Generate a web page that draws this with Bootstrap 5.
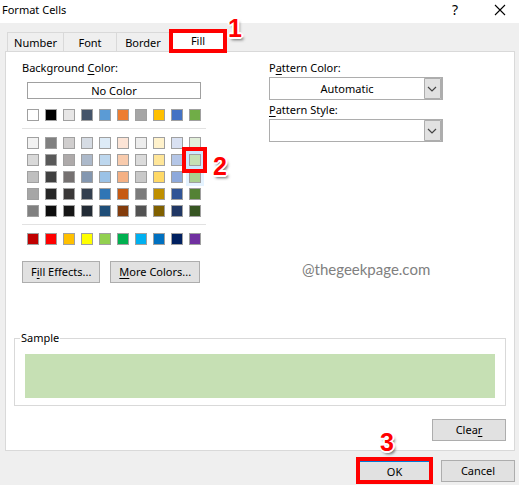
<!DOCTYPE html>
<html lang="en">
<head>
<meta charset="utf-8">
<meta name="viewport" content="width=device-width, initial-scale=1">
<title>Format Cells</title>
<link href="https://cdn.jsdelivr.net/npm/bootstrap@5.3.0/dist/css/bootstrap.min.css" rel="stylesheet">
<style>
body{background:#efefef;color:#000;font:11px/16px "Noto Sans","Open Sans",sans-serif}
.title-bar{height:23px;padding:0 13px 0 2px;line-height:20px}
.title-bar h1{font-size:11px;line-height:20px}
.title-bar button{border:0;background:none;padding:0;line-height:20px}
.title-bar .help{font-size:14px;margin-right:36px}
.tabs{margin:9px 6px 0 7px;border:0}
.tabs .nav-link{border:1px solid #d9d9d9;border-left-width:0;border-bottom:0;border-radius:0;background:#efefef;color:#000;padding:2px 0 0;height:19px;width:53px;line-height:16px;margin:0}
.tabs .first-tab{width:57px;border-left-width:1px}
.tabs .nav-link.active{background:#fff;width:58px;height:24px;margin:-3px 0 -2px -1px;border:4px solid #f00;padding:0;z-index:2}
.panel{background:#fff;border:1px solid #d9d9d9;margin:0 4px 0 5px}
.fill-side{padding:8px 10px 0 16px}
.pattern-side{padding:8px 10px 0 9px}
.btn-dialog{--bs-btn-font-size:11px;--bs-btn-line-height:16px;--bs-btn-padding-x:8px;--bs-btn-padding-y:2px;--bs-btn-border-radius:0;--bs-btn-color:#000;--bs-btn-bg:#e1e1e1;--bs-btn-border-color:#adadad;--bs-btn-hover-bg:#e5f1fb;--bs-btn-hover-border-color:#0078d7;--bs-btn-hover-color:#000}
.btn-short{width:74px}
.button-pair{gap:10px}
.no-color{display:block;width:174px;height:17px;padding:0;line-height:15px;border:1px solid #a0a0a0;background:#fff;margin:6px 0 10px 5px;color:#000}
.palette{display:grid;grid-template-columns:repeat(10,12px);column-gap:6px;row-gap:5px;width:184px;padding:0 5px}
.palette button{width:12px;height:12px;padding:0;border:1px solid #a0a0a0}
.palette .picked{outline:3px solid #cce8ff}
.palette .hovered{outline:3px solid #e5f3ff}
.rule{width:184px;height:1px;background:#e2e2e2;margin:7px 0 8px}
.picker{width:174px;height:23px;border:1px solid #adadad;border-radius:0;color:#000;font-size:11px;line-height:16px;padding:0 18px 0 0;text-align:center;text-align-last:center;margin:1px 0 2px;background:#fff url("data:image/svg+xml,%3Csvg xmlns='http://www.w3.org/2000/svg' width='18' height='21'%3E%3Cpath d='M.5.5h16v20H.5z' fill='%23e1e1e1' stroke='%23adadad'/%3E%3Cpath d='M17.5 0v21' stroke='%23adadad'/%3E%3Cpath d='M4 9l4 4 4-4' fill='none' stroke='%23444' stroke-width='1.2'/%3E%3C/svg%3E") right center/18px 21px no-repeat}
.spot{position:relative;display:block}
.red-frame{position:absolute;inset:-8px -7px -8px -8px;border:4px solid #f00;pointer-events:none}
.step{position:absolute;font:bold 25px/24px "Liberation Sans",sans-serif;color:#f00;text-shadow:-2px 0 #fff,2px 0 #fff,0 -2px #fff,0 2px #fff,-1px -1px #fff,1px -1px #fff,-1px 1px #fff,1px 1px #fff,2px 3px 3px #666;pointer-events:none}
.step-one{left:55px;top:-17px}
.step-two{left:23px;top:-1px}
.step-three{left:20px;top:-31px}
.watermark{font:15px/20px Lato,sans-serif;color:#808080;margin:117px 0 0 33px}
.sample{border:1px solid #d9d9d9;margin:47px 8px 13px 8px;padding:0 10px 7px}
.sample legend{float:none;width:auto;font-size:11px;line-height:16px;margin:0 0 0 -5px;padding:0 1px}
.sample-fill{height:44px;background:#c6e0b4;margin-top:8px}
.clear-row{margin:0 8px 9px}
.ok-frame{border:4px solid #f00;position:relative}
.ok-frame .btn{width:69px;height:19px;padding:0;line-height:17px;border:0;border-top:1px solid #0078d7}
.footer-row{margin:6px 4px 1px}
u{text-underline-offset:2px}
</style>
</head>
<body>
<header class="title-bar bg-white d-flex align-items-start">
  <h1 class="fw-normal mb-0 me-auto">Format Cells</h1>
  <button class="help" type="button" aria-label="Help">?</button>
  <button type="button" aria-label="Close"><svg class="d-block mt-1" width="12" height="12" viewBox="0 0 12 12"><path d="M1 1l10 10M11 1L1 11" stroke="#000" stroke-width="1.1"/></svg></button>
</header>
<nav class="tabs nav nav-tabs" role="tablist">
  <button class="nav-link first-tab" type="button" role="tab">Number</button>
  <button class="nav-link" type="button" role="tab">Font</button>
  <button class="nav-link" type="button" role="tab">Border</button>
  <button class="nav-link active position-relative" type="button" role="tab" aria-selected="true">Fill<span class="step step-one">1</span></button>
</nav>
<main>
  <section class="panel">
    <div class="row g-0">
      <div class="col-6 fill-side">
        <div>Background <u>C</u>olor:</div>
        <button class="no-color" type="button">No Color</button>
        <div class="palette" id="theme"></div>
        <div class="rule"></div>
        <div class="palette" id="shades"></div>
        <div class="rule"></div>
        <div class="palette" id="standard"></div>
        <div class="d-flex mt-3 button-pair">
          <button class="btn btn-dialog" type="button">F<u>i</u>ll Effects...</button>
          <button class="btn btn-dialog" type="button"><u>M</u>ore Colors...</button>
        </div>
      </div>
      <div class="col-6 pattern-side">
        <label class="d-block" for="pcolor">P<u>a</u>ttern Color:</label>
        <select class="picker form-select" id="pcolor"><option>Automatic</option></select>
        <label class="d-block" for="pstyle"><u>P</u>attern Style:</label>
        <select class="picker form-select" id="pstyle"><option></option></select>
        <div class="watermark">@thegeekpage.com</div>
      </div>
    </div>
    <fieldset class="sample">
      <legend>Sample</legend>
      <div class="sample-fill"></div>
    </fieldset>
    <div class="d-flex justify-content-end clear-row">
      <button class="btn btn-dialog btn-short" type="button">Clea<u>r</u></button>
    </div>
  </section>
  <div class="footer-row d-flex justify-content-end align-items-center gap-2">
    <div class="ok-frame"><button class="btn btn-dialog d-block" type="button">OK</button><span class="step step-three">3</span></div>
    <button class="btn btn-dialog btn-short" type="button">Cancel</button>
  </div>
</main>
<script src="https://cdn.jsdelivr.net/npm/bootstrap@5.3.0/dist/js/bootstrap.bundle.min.js"></script>
<script>
const palettes = {
  theme: 'ffffff 000000 e7e6e6 44546a 5b9bd5 ed7d31 a5a5a5 ffc000 4472c4 70ad47',
  shades: 'f2f2f2 808080 d0cece d6dce4 ddebf7 fce4d6 ededed fff2cc d9e1f2 e2efda ' +
    'd9d9d9 595959 aeaaaa acb9ca bdd7ee f8cbad dbdbdb ffe699 b4c6e7 c6e0b4 ' +
    'bfbfbf 404040 757171 8497b0 9bc2e6 f4b084 c9c9c9 ffd966 8ea9db a9d08e ' +
    'a6a6a6 262626 3a3838 333f4f 2f75b5 c65911 7b7b7b bf8f00 305496 548235 ' +
    '808080 0d0d0d 161616 222b35 1f4e78 833c0c 525252 806000 203764 375623',
  standard: 'c00000 ff0000 ffc000 ffff00 92d050 00b050 00b0f0 0070c0 002060 7030a0'
};
for (const [id, list] of Object.entries(palettes)) {
  list.split(' ').forEach((hex, i) => {
    const b = document.createElement('button');
    b.type = 'button';
    b.className = 'spot';
    b.style.backgroundColor = '#' + hex;
    b.setAttribute('aria-label', 'Color #' + hex);
    if (id === 'shades' && i === 19) {
      b.classList.add('picked', 'z-1');
      b.innerHTML = '<span class="red-frame"></span><span class="step step-two">2</span>';
    }
    if (id === 'shades' && i === 29) b.classList.add('hovered');
    document.getElementById(id).append(b);
  });
}
</script>
</body>
</html>
